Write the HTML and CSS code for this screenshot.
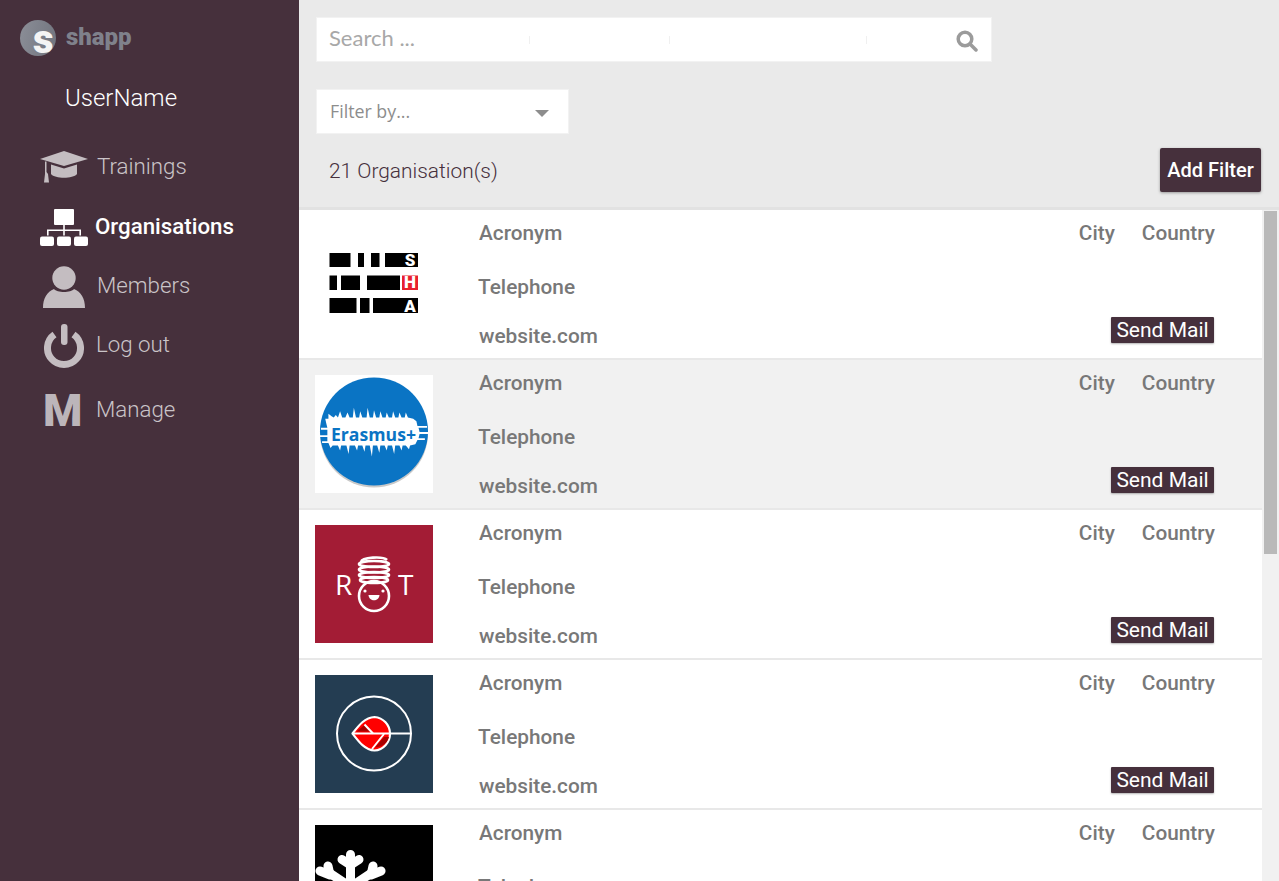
FILE: index.html
```html
<!DOCTYPE html>
<html lang="en">
<head>
<meta charset="utf-8">
<title>Organisations</title>
<link rel="stylesheet" href="styles.css">
</head>
<body>
<div class="app">
  <aside class="sidebar">
    <div class="brand">
      <span class="brand-mark"><span class="brand-s">s</span></span>
      <span class="brand-name">shapp</span>
    </div>
    <div class="user">UserName</div>
    <nav class="nav">
      <a class="nav-item nav-trainings">
        <svg class="nav-icon" viewBox="0 0 48 32"><path d="M0 8 24 0 48 8 24 15Z"/><path d="M11 13.500 24 17.500 37 13.500V23C33 28 15 28 11 23Z"/><path d="M5 10.500H6.500V21L8 23 9 31.500H4L5 23Z"/></svg>
        <span class="nav-label">Trainings</span>
      </a>
      <a class="nav-item nav-orgs active">
        <svg class="nav-icon" viewBox="0 0 48 37"><rect x="14" y="0" width="20" height="16" rx="1"/><path d="M23.200 16h1.600v4.500H41v6h-1.600v-4.400H24.800v4.400h-1.600v-4.400H8.600v4.400H7v-6h16.200z"/><rect x="0" y="27.500" width="14" height="9.500" rx="2"/><rect x="17" y="27.500" width="14" height="9.500" rx="2"/><rect x="34" y="27.500" width="14" height="9.500" rx="2"/></svg>
        <span class="nav-label">Organisations</span>
      </a>
      <a class="nav-item nav-members">
        <svg class="nav-icon" viewBox="0 0 42 42"><circle cx="21" cy="12" r="11.700"/><path d="M0 42C0 32 4 26 11 23C14 27 28 27 31 23C38 26 42 32 42 42Z"/></svg>
        <span class="nav-label">Members</span>
      </a>
      <a class="nav-item nav-logout">
        <svg class="nav-icon" viewBox="0 0 40 44"><path class="power-ring" d="M10.500 10.500A16.500 16.500 0 1 0 29.500 10.500"/><rect x="17" y="0" width="6.500" height="21" rx="3"/></svg>
        <span class="nav-label">Log out</span>
      </a>
      <a class="nav-item nav-manage">
        <span class="nav-m">M</span>
        <span class="nav-label">Manage</span>
      </a>
    </nav>
  </aside>

  <main class="main">
    <header class="toolbar">
      <div class="search">
        <span class="search-text">Search ...</span>
        <i class="tick tick-a"></i><i class="tick tick-b"></i><i class="tick tick-c"></i>
        <svg class="search-icon" viewBox="0 0 22 22"><circle cx="9" cy="9" r="6.800"/><path d="M14 14 20 20"/></svg>
      </div>
      <div class="filter">
        <span class="filter-text">Filter by...</span>
        <span class="caret"></span>
      </div>
      <div class="count-row">
        <span class="count">21 Organisation(s)</span>
        <button class="add-filter">Add Filter</button>
      </div>
    </header>

    <div class="list-wrap">
      <div class="list">
        <article class="org">
          <svg class="org-logo" viewBox="0 0 118 118">
            <rect width="118" height="118" fill="#fff"/>
            <g fill="#000">
              <rect x="14.500" y="28" width="21" height="14"/><rect x="43" y="28" width="6" height="14"/><rect x="56" y="28" width="8.500" height="14"/><rect x="70" y="28" width="33" height="14"/>
              <rect x="14.500" y="50.500" width="7.500" height="14.500"/><rect x="26" y="50.500" width="19" height="14.500"/><rect x="52" y="50.500" width="33" height="14.500"/>
              <rect x="14.500" y="73" width="27" height="15"/><rect x="45" y="73" width="9.500" height="15"/><rect x="58" y="73" width="45" height="15"/>
            </g>
            <rect x="87" y="50.500" width="16" height="14.500" fill="#e8202e"/>
            <g class="sha-text">
              <text x="95" y="40.500">S</text><text x="95" y="63">H</text><text x="95" y="86.500">A</text>
            </g>
          </svg>
          <div class="org-info">
            <div class="org-top"><span class="acronym">Acronym</span><span class="city">City</span><span class="country">Country</span></div>
            <div class="phone">Telephone</div>
            <div class="org-bottom"><span class="site">website.com</span><button class="mail">Send Mail</button></div>
          </div>
        </article>

        <article class="org org-hover">
          <svg class="org-logo" viewBox="0 0 118 118">
            <rect width="118" height="118" fill="#fff"/>
            <circle cx="59" cy="58.500" r="54" fill="#c9c9c9"/>
            <circle cx="59" cy="56.500" r="54" fill="#0a74c4"/>
            <path fill="#fff" transform="translate(59 56.500) scale(1.060 1.220) translate(-57 -56.500)" d="M11 46 14 46 14 42 17 44 19 45 21 43 23 45 25 40 27 45 30 45 32 41 34 45 37 45 38 37 40 45 43 45 44 40 46 45 50 45 51 37 53 45 56 45 57 39 59 45 62 45 63 40 65 45 68 45 69 41 71 45 74 45 75 40 77 45 80 45 81 41 83 45 86 45 87 41 89 45 94 46 97 48 98 52 107 52 107 53.500 99 53.500 100 57 109 57 109 58.500 100 58.500 99 62 105 62 105 63.500 98 63.500 96 67 91 68 90 71 87 68 84 68 83 72 81 68 77 68 76 75 74 68 70 68 69 72 67 68 63 68 62 74 60 68 56 68 55 77 53 68 49 68 48 73 46 68 42 68 41 72 39 68 34 68 33 75 31 68 26 68 25 72 23 68 18 68 16 70 14 66 8 66 8 64.500 13 64.500 13 61 5 61 5 59.500 13 59.500 13 55 7 55 7 53.500 13 53.500 12 50Z"/>
            <text class="erasmus" x="16" y="66" textLength="85" lengthAdjust="spacingAndGlyphs">Erasmus+</text>
          </svg>
          <div class="org-info">
            <div class="org-top"><span class="acronym">Acronym</span><span class="city">City</span><span class="country">Country</span></div>
            <div class="phone">Telephone</div>
            <div class="org-bottom"><span class="site">website.com</span><button class="mail">Send Mail</button></div>
          </div>
        </article>

        <article class="org">
          <svg class="org-logo" viewBox="0 0 118 118">
            <rect width="118" height="118" fill="#a31c35"/>
            <text class="rt" x="20" y="69.500">R</text>
            <text class="rt" x="83" y="69.500">T</text>
            <g class="rt-lines">
              <path d="M46 37C47 32 68 31 72 35"/>
              <ellipse cx="59" cy="39" rx="15" ry="3"/>
              <ellipse cx="59" cy="44.500" rx="15" ry="3"/>
              <ellipse cx="59" cy="50" rx="15" ry="3"/>
              <ellipse cx="59" cy="55" rx="14" ry="3"/>
              <circle cx="59" cy="71" r="15"/>
            </g>
            <circle cx="50" cy="66" r="1.600" fill="#fff"/>
            <circle cx="68" cy="66" r="1.600" fill="#fff"/>
            <path d="M53.500 70H64.500C64 77 54 77 53.500 70Z" fill="#fff"/>
          </svg>
          <div class="org-info">
            <div class="org-top"><span class="acronym">Acronym</span><span class="city">City</span><span class="country">Country</span></div>
            <div class="phone">Telephone</div>
            <div class="org-bottom"><span class="site">website.com</span><button class="mail">Send Mail</button></div>
          </div>
        </article>

        <article class="org">
          <svg class="org-logo" viewBox="0 0 118 118">
            <rect width="118" height="118" fill="#243d52"/>
            <circle cx="59" cy="58.500" r="37" fill="none" stroke="#fff" stroke-width="2"/>
            <path d="M37.500 58.500C44 50 50 42.500 59.500 42A16.800 16.800 0 0 1 59.500 75.500C50 75 44 67 37.500 58.500Z" fill="#f00" stroke="#fff" stroke-width="2.200" stroke-linejoin="round"/>
            <path d="M41.500 56.500 49.500 50 55 56.500Z" fill="#a80000"/>
            <path d="M60 72.500 69 62H74C73 67 68 72 60 72.500Z" fill="#a80000"/>
            <path d="M37.500 58.500H96" stroke="#fff" stroke-width="2.200" fill="none"/>
            <path d="M49.500 49.500 58 58.500M69 59 57 74" stroke="#fff" stroke-width="2" fill="none"/>
          </svg>
          <div class="org-info">
            <div class="org-top"><span class="acronym">Acronym</span><span class="city">City</span><span class="country">Country</span></div>
            <div class="phone">Telephone</div>
            <div class="org-bottom"><span class="site">website.com</span><button class="mail">Send Mail</button></div>
          </div>
        </article>

        <article class="org">
          <svg class="org-logo" viewBox="0 0 118 118">
            <rect width="118" height="118" fill="#000"/>
            <g class="flake">
              <path class="flake-arm" d="M35.500 32V70"/>
              <path d="M35.500 29.500V34M35.500 40 27 34.500M35.500 40 44 34.500"/>
              <path class="flake-arm" d="M13 47 35.500 62M58 47 35.500 62"/>
              <path d="M15 50 13 41M15 50 5 46M56 50 58 41M56 50 66 46"/>
            </g>
          </svg>
          <div class="org-info">
            <div class="org-top"><span class="acronym">Acronym</span><span class="city">City</span><span class="country">Country</span></div>
            <div class="phone">Telephone</div>
            <div class="org-bottom"><span class="site">website.com</span><button class="mail">Send Mail</button></div>
          </div>
        </article>
      </div>
      <div class="scrollbar"><div class="scroll-thumb"></div></div>
    </div>
  </main>
</div>
</body>
</html>
```

FILE: styles.css
```css
* { box-sizing: border-box; }
html, body { margin: 0; height: 100%; overflow: hidden; }
body { font-family: Roboto, "Liberation Sans", sans-serif; background: #eaeaea; }

.app { display: flex; height: 881px; }

/* sidebar */
.sidebar { width: 299px; flex: none; background: #46303c; color: #fff; }
.brand { display: flex; align-items: center; gap: 10px; padding: 20px 0 0 20px; height: 56px; }
.brand-mark { width: 36px; height: 36px; border-radius: 50%; background: linear-gradient(100deg, #8b8e97, #71747e); display: block; }
.brand-s { display: block; font-weight: 900; font-size: 40px; line-height: 40px; color: #f4f4f4; padding-left: 13px; }
.brand-name { font-weight: 900; font-size: 24px; color: #7f818b; margin-top: -2px; }
.user { font-weight: 300; font-size: 24px; line-height: 30px; margin: 27px 0 0 65px; }
.nav { display: flex; flex-direction: column; margin-top: 24px; padding-left: 40px; }
.nav-item { display: flex; align-items: center; height: 60px; font-weight: 300; font-size: 22.300px; color: #cac4c8; }
.nav-label { margin-bottom: 2px; }
.nav-icon { fill: #c4bdc1; display: block; flex: none; }
.nav-trainings { gap: 9px; }
.nav-trainings .nav-icon { width: 48px; height: 32px; }
.nav-orgs { gap: 7px; font-weight: 500; color: #fff; }
.nav-orgs .nav-icon { width: 48px; height: 37px; fill: #fff; }
.nav-members { gap: 12px; padding-left: 3px; }
.nav-members .nav-label { margin-bottom: 4px; }
.nav-members .nav-icon { width: 42px; height: 42px; }
.nav-logout { height: 58px; gap: 12px; padding-left: 4px; }
.nav-logout .nav-label { margin-bottom: 4px; }
.nav-logout .nav-icon { width: 40px; height: 44px; }
.power-ring { fill: none; stroke: #c4bdc1; stroke-width: 7; }
.nav-manage { height: 70px; gap: 13px; padding-left: 3px; }
.nav-m { font-weight: 900; font-size: 45px; line-height: 46px; color: #bcb5ba; width: 40px; margin-top: 2px; }

/* toolbar */
.main { flex: 1; min-width: 0; display: flex; flex-direction: column; position: relative; }
.toolbar { height: 210px; flex: none; padding: 17px 18px 0 17px; border-bottom: 3px solid #e2e2e2; }
.search { position: relative; width: 676px; height: 45px; background: #fff; border: 1px solid #f2f2f2; display: flex; align-items: center; justify-content: space-between; padding: 0 13px 0 12px; }
.search-text { font-family: Lato, sans-serif; font-size: 22px; color: #a8a8a8; margin-top: -5px; }
.search-icon { width: 22px; height: 22px; fill: none; stroke: #9b9b9b; stroke-width: 3.500; stroke-linecap: round; margin-top: 3px; }
.tick { position: absolute; top: 18px; width: 1px; height: 8px; background: #f0f0f0; }
.tick-a { left: 212px; }
.tick-b { left: 352px; }
.tick-c { left: 549px; }
.filter { width: 253px; height: 45px; margin-top: 27px; background: #fff; border: 1px solid #f2f2f2; display: flex; align-items: center; justify-content: space-between; padding: 0 19px 0 13px; font-family: "Open Sans", sans-serif; font-size: 17.800px; color: #8d8d8d; }
.filter-text { margin-top: -2px; }
.caret { width: 0; height: 0; border-left: 7px solid transparent; border-right: 7px solid transparent; border-top: 7px solid #8d8d8d; margin-top: 4px; }
.count-row { display: flex; align-items: center; justify-content: space-between; margin-top: 14px; padding-left: 13px; }
.count { font-weight: 300; font-size: 20.900px; color: #46303c; margin-top: 2px; }
.add-filter { width: 101px; height: 44px; padding: 0; border: 0; border-radius: 2px; background: #46303c; color: #fff; font-family: Roboto, sans-serif; font-weight: 500; font-size: 20px; box-shadow: 0 1px 3px rgba(0,0,0,.35); }

/* list */
.list-wrap { flex: 1; min-height: 0; display: flex; overflow: hidden; background: #fff; }
.list { flex: 1; min-width: 0; }
.org { display: flex; height: 150px; padding: 15px 47px 0 16px; border-bottom: 2px solid #e8e8e8; background: #fff; }
.org-hover { background: #f1f1f1; }
.org-logo { width: 118px; height: 118px; flex: none; display: block; }
.org-info { flex: 1; min-width: 0; margin-left: 46px; margin-top: -15px; color: #787878; font-weight: 500; font-size: 20.800px; }
.org-top { display: flex; align-items: center; height: 46px; }
.acronym { margin-right: auto; }
.city { margin-right: 27px; }
.phone { margin-left: -1px; height: 62px; line-height: 62px; }
.org-bottom { display: flex; align-items: flex-start; justify-content: space-between; height: 38px; }
.site { line-height: 38px; margin-top: -1px; }
.mail { width: 103px; height: 26px; margin: -1px 1px 0 0; padding: 0; border: 0; border-radius: 1px; background: #46303c; color: #fff; font-family: Roboto, sans-serif; font-size: 21px; box-shadow: 0 1px 2px rgba(0,0,0,.3); }

.scrollbar { width: 17px; flex: none; background: #f1f1f1; padding: 1px 2px 0; }
.scroll-thumb { height: 343px; background: #b9b9b9; }

/* logo text and shapes */
.sha-text text { font-family: Roboto, sans-serif; font-weight: 900; font-size: 17px; fill: #fff; text-anchor: middle; }
.erasmus { font-family: "Open Sans", sans-serif; font-weight: 700; font-size: 17px; fill: #0a74c4; }
.rt { font-family: "Open Sans", sans-serif; font-size: 28px; fill: #fff; }
.rt-lines { fill: none; stroke: #fff; stroke-width: 2.600; }
.flake { fill: none; stroke: #fff; stroke-width: 9; stroke-linecap: round; }
.flake-arm { stroke-linecap: butt; }
```
